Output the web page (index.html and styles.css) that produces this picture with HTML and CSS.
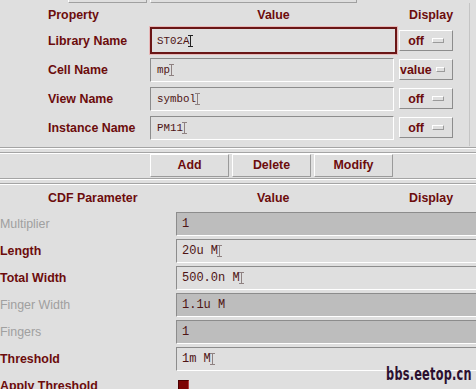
FILE: index.html
```html
<!DOCTYPE html>
<html lang="en">
<head>
<meta charset="UTF-8" />
<title>Edit Object Properties</title>
<link rel="stylesheet" href="styles.css">
</head>
<body>

<!-- pedaços das caixas de cima, cortadas -->
<div class="strip">
  <span class="strip-box w1"></span>
  <span class="strip-box w2"></span>
</div>

<div class="props">
  <div class="props-head">
    <span class="h-prop">Property</span>
    <span class="h-value">Value</span>
    <span class="h-display">Display</span>
  </div>

  <div class="prop-row">
    <span class="label">Library Name</span>
    <div class="field focus">ST02A<span class="caret"></span></div>
    <button class="cycle">off <i class="knob"></i></button>
  </div>
  <div class="prop-row">
    <span class="label">Cell Name</span>
    <div class="field">mp<span class="caret dim"></span></div>
    <button class="cycle tight">value <i class="knob"></i></button>
  </div>
  <div class="prop-row">
    <span class="label">View Name</span>
    <div class="field">symbol<span class="caret dim"></span></div>
    <button class="cycle">off <i class="knob"></i></button>
  </div>
  <div class="prop-row">
    <span class="label">Instance Name</span>
    <div class="field">PM11<span class="caret dim"></span></div>
    <button class="cycle">off <i class="knob"></i></button>
  </div>
</div>

<div class="groove"></div>
<div class="actions">
  <button class="btn">Add</button>
  <button class="btn">Delete</button>
  <button class="btn">Modify</button>
</div>
<div class="groove"></div>

<div class="cdf">
  <div class="cdf-head">
    <span class="h-cdf">CDF Parameter</span>
    <span class="h-cvalue">Value</span>
    <span class="h-cdisplay">Display</span>
  </div>

  <div class="cdf-row">
    <span class="label off">Multiplier</span>
    <div class="field wide gray">1</div>
  </div>
  <div class="cdf-row">
    <span class="label">Length</span>
    <div class="field wide">20u M<span class="caret dim"></span></div>
  </div>
  <div class="cdf-row">
    <span class="label">Total Width</span>
    <div class="field wide">500.0n M<span class="caret dim"></span></div>
  </div>
  <div class="cdf-row">
    <span class="label off">Finger Width</span>
    <div class="field wide gray">1.1u M</div>
  </div>
  <div class="cdf-row">
    <span class="label off">Fingers</span>
    <div class="field wide gray">1</div>
  </div>
  <div class="cdf-row">
    <span class="label">Threshold</span>
    <div class="field wide">1m M<span class="caret dim"></span></div>
  </div>
  <div class="cdf-row">
    <span class="label">Apply Threshold</span>
    <span class="check"></span>
  </div>
</div>

<div class="watermark">bbs.eetop.cn</div>

</body>
</html>
```

FILE: styles.css
```css
:root {
  --bg: #dfdfdf;
  --label: #6c0c0c;
  --text: #4e1414;
  --dark: #8c8c8c;
  --light: #ffffff;
  --gray-field: #bdbdbd;
}

body {
  margin: 0;
  width: 476px;
  height: 389px;
  overflow: hidden;
  background: var(--bg);
  font-family: "Liberation Sans", Arial, sans-serif;
  font-size: 12.4px;
  position: relative;
}

button {
  font-family: inherit;
  font-size: inherit;
  padding: 0;
  cursor: pointer;
}

/* faixa de cima */
.strip {
  height: 3px;
  display: flex;
  gap: 3px;
  padding-left: 68px;
}

.strip-box {
  height: 2px;
  border: 1px solid;
  border-top: none;
  border-color: var(--light) #a0a0a0 #a0a0a0 var(--light);
}

.w1 { width: 77px; }
.w2 { width: 205px; }

/* propriedades */
.props {
  width: 469px;
  border-right: 1px solid #c4c4c4;
  padding-bottom: 4px;
}

.props-head {
  height: 23px;
  display: flex;
  align-items: center;
  font-weight: bold;
  color: var(--label);
}

.h-prop { margin-left: 48px; width: 102px; }
.h-value { width: 247px; text-align: center; }
.h-display { margin-left: 12px; }

.prop-row {
  height: 29px;
  display: grid;
  grid-template-columns: 48px 102px 249px 54px;
  align-items: center;
}

.label {
  font-weight: bold;
  color: var(--label);
  white-space: nowrap;
}

.prop-row .label {
  grid-column: 2;
}

.field {
  box-sizing: border-box;
  height: 24px;
  width: 244px;
  display: flex;
  align-items: center;
  padding-left: 6px;
  font-family: "Liberation Mono", "Courier New", monospace;
  font-size: 10.8px;
  color: var(--text);
  border: 1px solid;
  border-color: var(--dark) var(--light) var(--light) var(--dark);
  background: var(--bg);
}

.field.focus {
  width: 247px;
  height: 27px;
  border: 2px solid #6a1616;
  outline: 1px solid #e8b8b8;
  padding-left: 5px;
}

.caret {
  display: inline-block;
  width: 1px;
  height: 12px;
  margin-left: 1px;
  background: #222;
  position: relative;
}

.caret::before,
.caret::after {
  content: "";
  position: absolute;
  left: -2px;
  width: 5px;
  height: 1px;
  background: inherit;
}

.caret::before { top: 0; }
.caret::after { bottom: 0; }

.caret.dim {
  background: #7a6a6a;
  opacity: 0.8;
}

.cycle {
  box-sizing: border-box;
  height: 21px;
  width: 54px;
  display: flex;
  align-items: center;
  justify-content: flex-end;
  gap: 8px;
  padding-right: 8px;
  font-weight: bold;
  color: var(--label);
  background: var(--bg);
  border: 1px solid;
  border-color: var(--light) var(--dark) var(--dark) var(--light);
}

.cycle.tight { gap: 4px; padding-right: 7px; }

.knob {
  display: block;
  width: 10px;
  height: 3px;
  border: 1px solid;
  border-color: var(--light) #9a9a9a #9a9a9a var(--light);
}

/* separador e botões */
.groove {
  height: 6px;
  margin-top: 1px;
  border-top: 1px solid #a4a4a4;
  border-bottom: 1px solid #a4a4a4;
  box-shadow: inset 0 1px 0 var(--light), 0 1px 0 var(--light);
  box-sizing: border-box;
}

.actions {
  height: 24px;
  display: flex;
  align-items: center;
  gap: 3px;
  padding-left: 150px;
}

.btn {
  box-sizing: border-box;
  width: 79px;
  height: 23px;
  font-weight: bold;
  color: var(--label);
  background: var(--bg);
  border: 1px solid;
  border-color: var(--light) #9a9a9a #9a9a9a var(--light);
}

/* parâmetros CDF */
.cdf-head {
  height: 25px;
  margin-top: 1px;
  display: flex;
  align-items: center;
  font-weight: bold;
  color: var(--label);
}

.h-cdf { margin-left: 48px; width: 209px; }
.h-cvalue { width: 152px; }

.cdf-row {
  height: 27px;
  display: flex;
  align-items: center;
}

.cdf-row .label {
  width: 176px;
  flex-shrink: 0;
}

.label.off {
  font-weight: normal;
  color: #a0a0a0;
}

.field.wide {
  width: 310px;
  flex-shrink: 0;
  font-size: 12px;
  padding-left: 5px;
}

.field.gray {
  background: var(--gray-field);
}

.check {
  width: 11px;
  height: 11px;
  margin-left: 2px;
  background: #7c0505;
  border: 1px solid;
  border-color: #4a0000 #b04040 #b04040 #4a0000;
  box-sizing: border-box;
}

.watermark {
  position: absolute;
  right: 4px;
  bottom: 5px;
  font-family: "DejaVu Sans Condensed", "DejaVu Sans", sans-serif;
  font-weight: bold;
  font-size: 17px;
  letter-spacing: 0.3px;
  color: #2c1030;
  transform: scaleX(0.74);
  transform-origin: right center;
}
```
